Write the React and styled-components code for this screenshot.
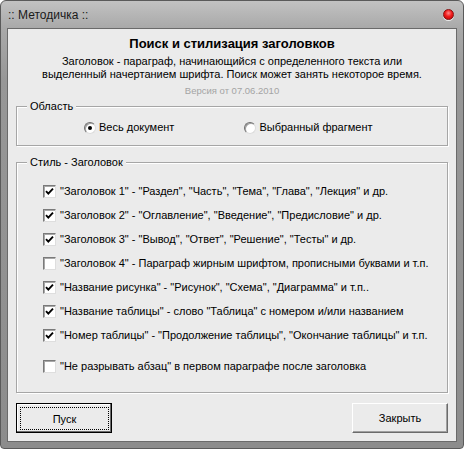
import React from 'react';
import styled, { createGlobalStyle } from 'styled-components';

const Global = createGlobalStyle`
  html, body { margin: 0; padding: 0; background: #ffffff; }
  body { font-family: "Liberation Sans", Arial, sans-serif; color: #000; }
  * { box-sizing: border-box; }
`;

const Window = styled.div`
  width: 464px;
  height: 449px;
  border: 1px solid #5a5a5a;
  border-radius: 6px 6px 4px 4px;
  background: linear-gradient(180deg, #c2c2c2 0px, #a9a9a9 27px, #979797 80px, #8c8c8c 100%);
  display: flex;
  flex-direction: column;
  padding: 0 6px 6px;
`;

const TitleBar = styled.div`
  height: 27px;
  display: flex;
  align-items: center;
  justify-content: space-between;
  padding: 0 3px 0 1px;
  font-size: 12px;
  color: #1a1a1a;
`;

const CloseDot = styled.div`
  width: 11px;
  height: 11px;
  border-radius: 50%;
  border: 1px solid #8a1010;
  background: radial-gradient(circle at 50% 35%, #ff8a8a 0%, #f01c1c 45%, #b80000 100%);
  box-shadow: 0 1px 0 rgba(255, 255, 255, 0.75);
`;

const Panel = styled.div`
  flex: 1;
  border: 1px solid #6a6a6a;
  background: #ebebeb;
  display: flex;
  flex-direction: column;
  padding: 0 8px;
`;

const Header = styled.div`
  padding-top: 7px;
  text-align: center;
`;

const Heading = styled.div`
  font-size: 13px;
  font-weight: bold;
  line-height: 16px;
  margin-bottom: 3px;
`;

const Desc = styled.div`
  font-size: 11px;
  line-height: 13px;
`;

const Version = styled.div`
  font-size: 9.5px;
  line-height: 13px;
  color: #a4a4a4;
  margin-top: 3px;
`;

const Group = styled.fieldset`
  margin: ${(p) => p.$top}px 0 0;
  border: 1px solid #a6a6a6;
  box-shadow: inset 1px 1px 0 #ffffff, 1px 1px 0 #ffffff;
  padding: ${(p) => p.$pad};
  min-width: 0;
`;

const Legend = styled.legend`
  margin-left: 10px;
  padding: 0 3px;
  font-size: 11px;
  line-height: 13px;
  background: #ebebeb;
`;

const RadioRow = styled.div`
  display: flex;
  align-items: center;
  gap: 70px;
  padding-left: 67px;
  height: 13px;
`;

const Option = styled.div`
  display: flex;
  align-items: center;
  gap: 3px;
  font-size: 11px;
  line-height: 13px;
`;

const RadioCircle = styled.span`
  width: 12px;
  height: 12px;
  border-radius: 50%;
  border: 1px solid #8a8a8a;
  border-top-color: #6e6e6e;
  border-left-color: #6e6e6e;
  border-bottom-color: #dcdcdc;
  border-right-color: #dcdcdc;
  background: #ffffff;
  box-shadow: inset 1px 1px 0 #a0a0a0;
  display: flex;
  align-items: center;
  justify-content: center;
  &::after {
    content: '';
    width: 4px;
    height: 4px;
    border-radius: 50%;
    background: ${(p) => (p.$on ? '#000' : 'transparent')};
  }
`;

const CheckList = styled.div`
  display: flex;
  flex-direction: column;
  padding-left: 26px;
`;

const CheckRow = styled.div`
  height: 24px;
  display: flex;
  align-items: center;
  gap: 4px;
  font-size: 11px;
  margin-top: ${(p) => (p.$gap ? 7 : 0)}px;
`;

const Box = styled.span`
  width: 13px;
  height: 13px;
  border: 1px solid;
  border-color: #7a7a7a #dedede #dedede #7a7a7a;
  box-shadow: inset 1px 1px 0 #a8a8a8;
  background: #ffffff;
  display: flex;
  align-items: center;
  justify-content: center;
  flex: none;
`;

const ButtonRow = styled.div`
  margin-top: 10px;
  display: flex;
  justify-content: space-between;
`;

const Button = styled.div`
  width: ${(p) => p.$w}px;
  height: 30px;
  background: #ebebeb;
  font-size: 11px;
  display: flex;
  padding: ${(p) => (p.$default ? '3px 2px 2px 3px' : '0')};
  border: 1px solid ${(p) => (p.$default ? '#000' : '#e8e8e8')};
  ${(p) =>
    p.$default
      ? 'box-shadow: inset -1px -1px 0 #6b6b6b, inset 1px 1px 0 #ffffff;'
      : 'border-color: #ffffff #6b6b6b #6b6b6b #ffffff; box-shadow: inset -1px -1px 0 #a0a0a0;'}
`;

const ButtonFace = styled.span`
  flex: 1;
  display: flex;
  align-items: center;
  justify-content: center;
  border: 1px dotted ${(p) => (p.$focus ? '#000' : 'transparent')};
`;

const Check = () => (
  <svg width="9" height="9" viewBox="0 0 9 9">
    <path d="M1 4.2 L3.3 6.6 L8 1.6" fill="none" stroke="#000" strokeWidth="1.9" />
  </svg>
);

const items = [
  ['"Заголовок 1" - "Раздел", "Часть", "Тема", "Глава", "Лекция" и др.', true],
  ['"Заголовок 2" - "Оглавление", "Введение", "Предисловие" и др.', true],
  ['"Заголовок 3" - "Вывод", "Ответ", "Решение", "Тесты" и др.', true],
  ['"Заголовок 4" - Параграф жирным шрифтом, прописными буквами и т.п.', false],
  ['"Название рисунка" - "Рисунок", "Схема", "Диаграмма" и т.п..', true],
  ['"Название таблицы" - слово "Таблица" с номером и/или названием', true],
  ['"Номер таблицы" - "Продолжение таблицы", "Окончание таблицы" и т.п.', true],
];

export default function App() {
  return (
    <>
      <Global />
      <Window>
        <TitleBar>
          <span>:: Методичка ::</span>
          <CloseDot />
        </TitleBar>
        <Panel>
          <Header>
            <Heading>Поиск и стилизация заголовков</Heading>
            <Desc>Заголовок - параграф, начинающийся с определенного текста или</Desc>
            <Desc>выделенный начертанием шрифта. Поиск может занять некоторое время.</Desc>
            <Version>Версия от 07.06.2010</Version>
          </Header>
          <Group $top={3} $pad="8px 0 11px">
            <Legend>Область</Legend>
            <RadioRow>
              <Option>
                <RadioCircle $on />
                Весь документ
              </Option>
              <Option>
                <RadioCircle />
                Выбранный фрагмент
              </Option>
            </RadioRow>
          </Group>
          <Group $top={10} $pad="10px 0 14px">
            <Legend>Стиль - Заголовок</Legend>
            <CheckList>
              {items.map(([t, on]) => (
                <CheckRow key={t}>
                  <Box>{on && <Check />}</Box>
                  {t}
                </CheckRow>
              ))}
              <CheckRow $gap>
                <Box />
                "Не разрывать абзац" в первом параграфе после заголовка
              </CheckRow>
            </CheckList>
          </Group>
          <ButtonRow>
            <Button $w={96} $default>
              <ButtonFace $focus>Пуск</ButtonFace>
            </Button>
            <Button $w={96}>
              <ButtonFace>Закрыть</ButtonFace>
            </Button>
          </ButtonRow>
        </Panel>
      </Window>
    </>
  );
}
